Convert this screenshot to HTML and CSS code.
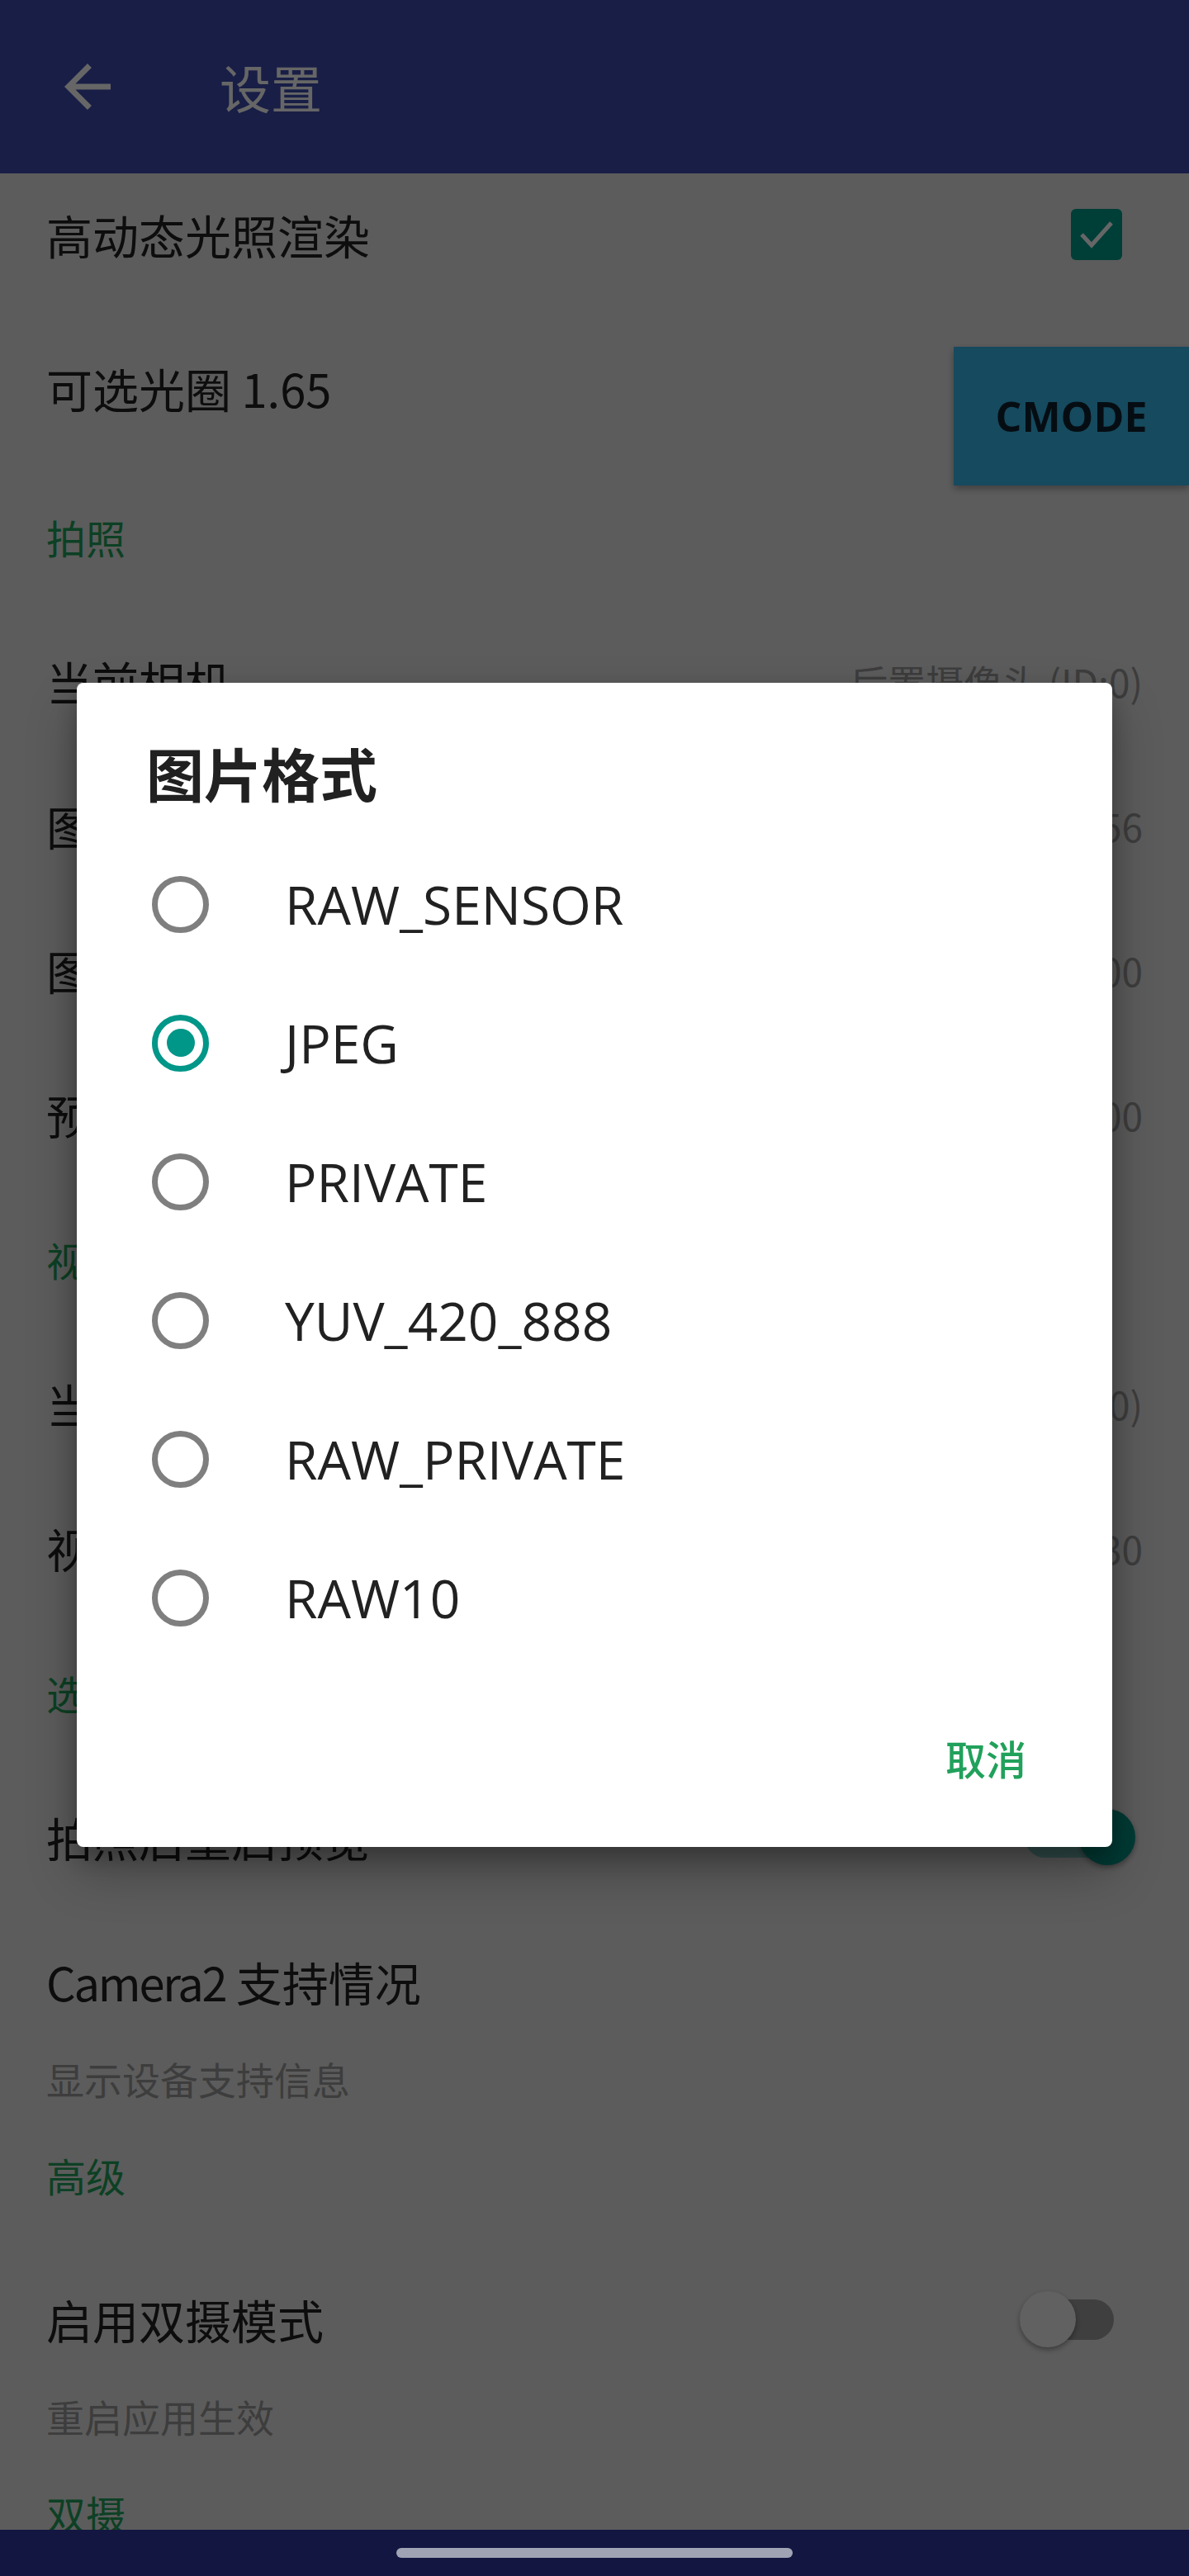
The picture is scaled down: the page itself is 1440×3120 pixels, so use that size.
FILE: index.html
```html
<!DOCTYPE html>
<html lang="zh-CN">
<head>
<meta charset="utf-8">
<title>设置</title>
<link rel="stylesheet" href="styles.css">
</head>
<body>
<div class="screen">
  <main class="app">
    <header class="appbar">
      <svg class="back" viewBox="0 0 24 24" aria-hidden="true"><path d="M20 11H7.83l5.59-5.59L12 4l-8 8 8 8 1.41-1.41L7.83 13H20v-2z"/></svg>
      <h1 class="appbar-title">设置</h1>
    </header>

    <div class="prefs">
      <div class="pref pref-first">
        <span class="pref-title">高动态光照渲染</span>
        <span class="checkbox"><svg viewBox="0 0 62 62" aria-hidden="true"><polyline points="13,31 25,44 49,17"/></svg></span>
      </div>
      <div class="pref pref-second"><span class="pref-title">可选光圈 1.65</span></div>
      <div class="pref category">拍照</div>
      <div class="pref"><span class="pref-title">当前相机</span><span class="pref-value">后置摄像头 (ID:0)</span></div>
      <div class="pref"><span class="pref-title">图片格式</span><span class="pref-value">256</span></div>
      <div class="pref"><span class="pref-title">图片尺寸</span><span class="pref-value">4000x3000</span></div>
      <div class="pref"><span class="pref-title">预览尺寸</span><span class="pref-value">1600x1200</span></div>
      <div class="pref category">视频</div>
      <div class="pref"><span class="pref-title">当前相机</span><span class="pref-value">后置摄像头 (ID:0)</span></div>
      <div class="pref"><span class="pref-title">视频帧率</span><span class="pref-value">30</span></div>
      <div class="pref category">选项</div>
      <div class="pref">
        <span class="pref-title">拍照后重启预览</span>
        <span class="switch on"><span class="track"></span><span class="thumb"></span></span>
      </div>
      <div class="pref two-line">
        <div class="pref-line"><span class="pref-title"><span class="latin-tight">Camera2</span> 支持情况</span></div>
        <div class="pref-summary">显示设备支持信息</div>
      </div>
      <div class="pref category">高级</div>
      <div class="pref two-line">
        <div class="pref-line">
          <span class="pref-title">启用双摄模式</span>
          <span class="switch"><span class="track"></span><span class="thumb"></span></span>
        </div>
        <div class="pref-summary">重启应用生效</div>
      </div>
      <div class="pref category">双摄</div>
    </div>

    <button class="cmode">CMODE</button>

    <div class="scrim">
      <div class="dialog" role="dialog">
        <h2 class="dialog-title">图片格式</h2>
        <ul class="choices">
          <li class="choice"><span class="radio"></span><span class="choice-label">RAW_SENSOR</span></li>
          <li class="choice"><span class="radio checked"></span><span class="choice-label">JPEG</span></li>
          <li class="choice"><span class="radio"></span><span class="choice-label">PRIVATE</span></li>
          <li class="choice"><span class="radio"></span><span class="choice-label">YUV_420_888</span></li>
          <li class="choice"><span class="radio"></span><span class="choice-label">RAW_PRIVATE</span></li>
          <li class="choice"><span class="radio"></span><span class="choice-label">RAW10</span></li>
        </ul>
        <div class="dialog-actions"><button class="text-button">取消</button></div>
      </div>
    </div>
  </main>
  <nav class="navbar"><span class="pill"></span></nav>
</div>
</body>
</html>
```

FILE: styles.css
```css
html, body {
  margin: 0;
  padding: 0;
}

body {
  width: 1440px;
  height: 3120px;
  overflow: hidden;
  font-family: "Noto Sans CJK SC", "Noto Sans", sans-serif;
  background: #131640;
}

.screen {
  display: flex;
  flex-direction: column;
  width: 1440px;
  height: 3120px;
}

.app {
  position: relative;
  height: 3064px;
  overflow: hidden;
  background: #e6e6e6;
}

/* ---------- app bar ---------- */
.appbar {
  display: flex;
  align-items: center;
  height: 210px;
  background: #3c4baf;
  color: #ffffff;
  padding-left: 64px;
  box-sizing: border-box;
}

.back {
  width: 84px;
  height: 84px;
  fill: #ffffff;
  flex: none;
}

.appbar-title {
  margin: 0 0 0 118px;
  font-size: 62px;
  font-weight: 400;
  line-height: 84px;
}

/* ---------- preferences ---------- */
.pref {
  display: flex;
  align-items: center;
  justify-content: space-between;
  height: 175px;
  padding: 0 56px 10px 56px;
  box-sizing: border-box;
}

.pref-first {
  height: 158px;
}

.pref-second {
  height: 199px;
  padding-top: 14px;
}

.pref-title {
  font-size: 56px;
  line-height: 76px;
  color: #212121;
}

.latin-tight {
  letter-spacing: -0.04em;
}

.pref-value {
  font-size: 46px;
  line-height: 60px;
  color: #9a9a9a;
}

.category {
  font-size: 48px;
  line-height: 64px;
  color: #21a15b;
}

.two-line {
  height: 234px;
  flex-direction: column;
  align-items: stretch;
  justify-content: flex-start;
  padding-top: 45px;
}

.pref-line {
  display: flex;
  align-items: center;
  justify-content: space-between;
  height: 76px;
}

.pref-summary {
  margin-top: 50px;
  height: 58px;
  font-size: 46px;
  line-height: 58px;
  color: #9a9a9a;
}

.checkbox {
  width: 62px;
  height: 62px;
  margin-right: 25px;
  border-radius: 6px;
  background: #009b8c;
}

.checkbox svg {
  display: block;
  width: 62px;
  height: 62px;
  fill: none;
  stroke: #ffffff;
  stroke-width: 5;
}

.switch {
  position: relative;
  width: 140px;
  height: 70px;
  margin-right: 9px;
  flex: none;
}

.switch .track {
  position: absolute;
  left: 6px;
  top: 11px;
  width: 108px;
  height: 49px;
  border-radius: 25px;
  background: #9e9e9e;
}

.switch .thumb {
  position: absolute;
  left: 0;
  top: 1px;
  width: 68px;
  height: 68px;
  border-radius: 50%;
  background: #f2f2f2;
  box-shadow: 0 3px 6px rgba(0, 0, 0, 0.35);
}

.switch.on .track {
  background: #7fcbc3;
}

.switch.on .thumb {
  left: 72px;
  background: #009385;
}

/* ---------- floating button ---------- */
.cmode {
  position: absolute;
  top: 420px;
  right: 0;
  width: 285px;
  height: 168px;
  border: none;
  padding: 0;
  background: #37b9eb;
  color: #0d2230;
  font-family: "Open Sans", sans-serif;
  font-weight: 700;
  font-size: 50px;
  box-shadow: 0 4px 8px rgba(0, 0, 0, 0.3);
}

/* ---------- dialog ---------- */
.scrim {
  position: absolute;
  inset: 0;
  display: flex;
  align-items: center;
  justify-content: center;
  background: rgba(0, 0, 0, 0.6);
}

.dialog {
  width: 1254px;
  background: #ffffff;
  border-radius: 8px;
  box-shadow: 0 30px 60px rgba(0, 0, 0, 0.28), 0 12px 24px rgba(0, 0, 0, 0.22);
}

.dialog-title {
  margin: 0;
  padding: 62px 84px 28px 84px;
  font-size: 70px;
  line-height: 94px;
  font-weight: 700;
  color: #212121;
}

.choices {
  list-style: none;
  margin: 0;
  padding: 0;
}

.choice {
  display: flex;
  align-items: center;
  height: 168px;
  padding-left: 91px;
}

.radio {
  width: 69px;
  height: 69px;
  box-sizing: border-box;
  border: 7px solid #7f7f7f;
  border-radius: 50%;
  flex: none;
  display: flex;
  align-items: center;
  justify-content: center;
}

.radio.checked {
  border-color: #009688;
}

.radio.checked::after {
  content: "";
  width: 34px;
  height: 34px;
  border-radius: 50%;
  background: #009688;
}

.choice-label {
  margin-left: 92px;
  font-family: "Open Sans", "Noto Sans", sans-serif;
  font-size: 64px;
  color: #212121;
}

.dialog-actions {
  display: flex;
  justify-content: flex-end;
  align-items: flex-start;
  height: 218px;
  padding: 78px 104px 0 0;
  box-sizing: border-box;
}

.text-button {
  border: none;
  background: none;
  padding: 0;
  font-family: "Noto Sans CJK SC", sans-serif;
  font-size: 49px;
  line-height: 64px;
  font-weight: 500;
  color: #21a15b;
}

/* ---------- system navigation ---------- */
.navbar {
  display: flex;
  align-items: center;
  justify-content: center;
  height: 56px;
  background: #131640;
}

.pill {
  width: 480px;
  height: 12px;
  border-radius: 6px;
  background: #a0a3b4;
}
```
